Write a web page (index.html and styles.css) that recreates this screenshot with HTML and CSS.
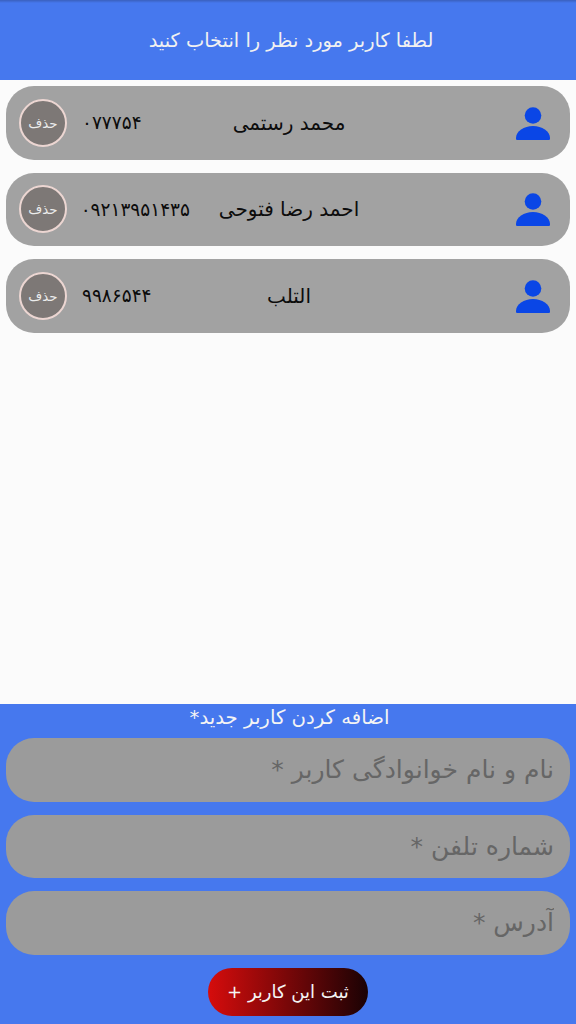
FILE: index.html
```html
<!DOCTYPE html>
<html lang="fa" dir="rtl">
<head>
  <meta charset="utf-8">
  <title>انتخاب کاربر</title>
  <link rel="stylesheet" href="styles.css">
</head>
<body>

<header class="header">لطفا کاربر مورد نظر را انتخاب کنید</header>

<main class="users">
  <div class="user">
    <svg class="user-icon" viewBox="0 0 34 34"><circle cx="17" cy="8.5" r="8.3"/><path d="M1 33c-1 0-1-1-1-2 0-7 8-12 17-12s17 5 17 12c0 1 0 2-1 2z"/></svg>
    <span class="user-name">محمد رستمی</span>
    <span class="user-phone">۰۷۷۷۵۴</span>
    <button class="delete">حذف</button>
  </div>
  <div class="user">
    <svg class="user-icon" viewBox="0 0 34 34"><circle cx="17" cy="8.5" r="8.3"/><path d="M1 33c-1 0-1-1-1-2 0-7 8-12 17-12s17 5 17 12c0 1 0 2-1 2z"/></svg>
    <span class="user-name">احمد رضا فتوحی</span>
    <span class="user-phone">۰۹۲۱۳۹۵۱۴۳۵</span>
    <button class="delete">حذف</button>
  </div>
  <div class="user">
    <svg class="user-icon" viewBox="0 0 34 34"><circle cx="17" cy="8.5" r="8.3"/><path d="M1 33c-1 0-1-1-1-2 0-7 8-12 17-12s17 5 17 12c0 1 0 2-1 2z"/></svg>
    <span class="user-name">التلب</span>
    <span class="user-phone">۹۹۸۶۵۴۴</span>
    <button class="delete">حذف</button>
  </div>
</main>

<form class="add-form">
  <div class="add-title">اضافه کردن کاربر جدید*</div>
  <input class="field" type="text" placeholder="نام و نام خوانوادگی کاربر *">
  <input class="field" type="text" placeholder="شماره تلفن *">
  <input class="field" type="text" placeholder="آدرس *">
  <button class="submit" type="button">ثبت این کاربر +</button>
</form>

</body>
</html>
```

FILE: styles.css
```css
html, body {
  margin: 0;
  padding: 0;
  height: 100%;
  background: #fbfbfb;
  font-family: "DejaVu Sans", sans-serif;
  overflow: hidden;
}

body {
  display: flex;
  flex-direction: column;
}

.header {
  height: 80px;
  flex-shrink: 0;
  box-sizing: border-box;
  display: flex;
  justify-content: center;
  align-items: center;
  padding-left: 6px;
  background: linear-gradient(#3a60bd, #4678ee 3px);
  color: #f1f1f1;
  font-size: 19.4px;
}

.users {
  flex: 1;
  display: flex;
  flex-direction: column;
  gap: 13px;
  padding: 6px 6px 0;
}

.user {
  height: 73.5px;
  display: flex;
  align-items: center;
  background: #a2a2a2;
  border-radius: 28px;
  padding: 0 20px 0 13px;
  color: #0c0c0c;
}

.user-icon {
  width: 34px;
  height: 34px;
  margin-top: 2px;
  fill: #0a46e6;
  flex-shrink: 0;
}

.user-name {
  width: 198px;
  margin-right: auto;
  text-align: center;
  font-size: 20px;
}

.user-phone {
  width: 108px;
  margin-left: 15px;
  text-align: left;
  font-size: 18.5px;
}

.delete {
  width: 48px;
  height: 48px;
  flex-shrink: 0;
  padding: 0;
  border: 2px solid #ecd6d2;
  border-radius: 50%;
  background: #7d7876;
  color: #ececec;
  font-family: inherit;
  font-size: 13.5px;
}

.add-form {
  height: 320px;
  flex-shrink: 0;
  box-sizing: border-box;
  display: flex;
  flex-direction: column;
  align-items: center;
  background: #4678ee;
  padding: 0 6px;
}

.add-title {
  height: 34px;
  line-height: 27px;
  padding-left: 3px;
  color: #f4f4f4;
  font-size: 19.7px;
}

.field {
  width: 100%;
  height: 63.5px;
  flex-shrink: 0;
  box-sizing: border-box;
  margin-bottom: 13px;
  padding: 0 16px;
  border: none;
  border-radius: 28px;
  background: #9b9b9b;
  color: #333;
  font-family: inherit;
  font-size: 25px;
}

.field::placeholder {
  color: #666;
  opacity: 1;
}

.submit {
  width: 160px;
  height: 48px;
  border: none;
  border-radius: 24px;
  background: linear-gradient(to left, #1a0204, #d60c0c);
  color: #f5f5f5;
  font-family: inherit;
  font-size: 18px;
}
```
